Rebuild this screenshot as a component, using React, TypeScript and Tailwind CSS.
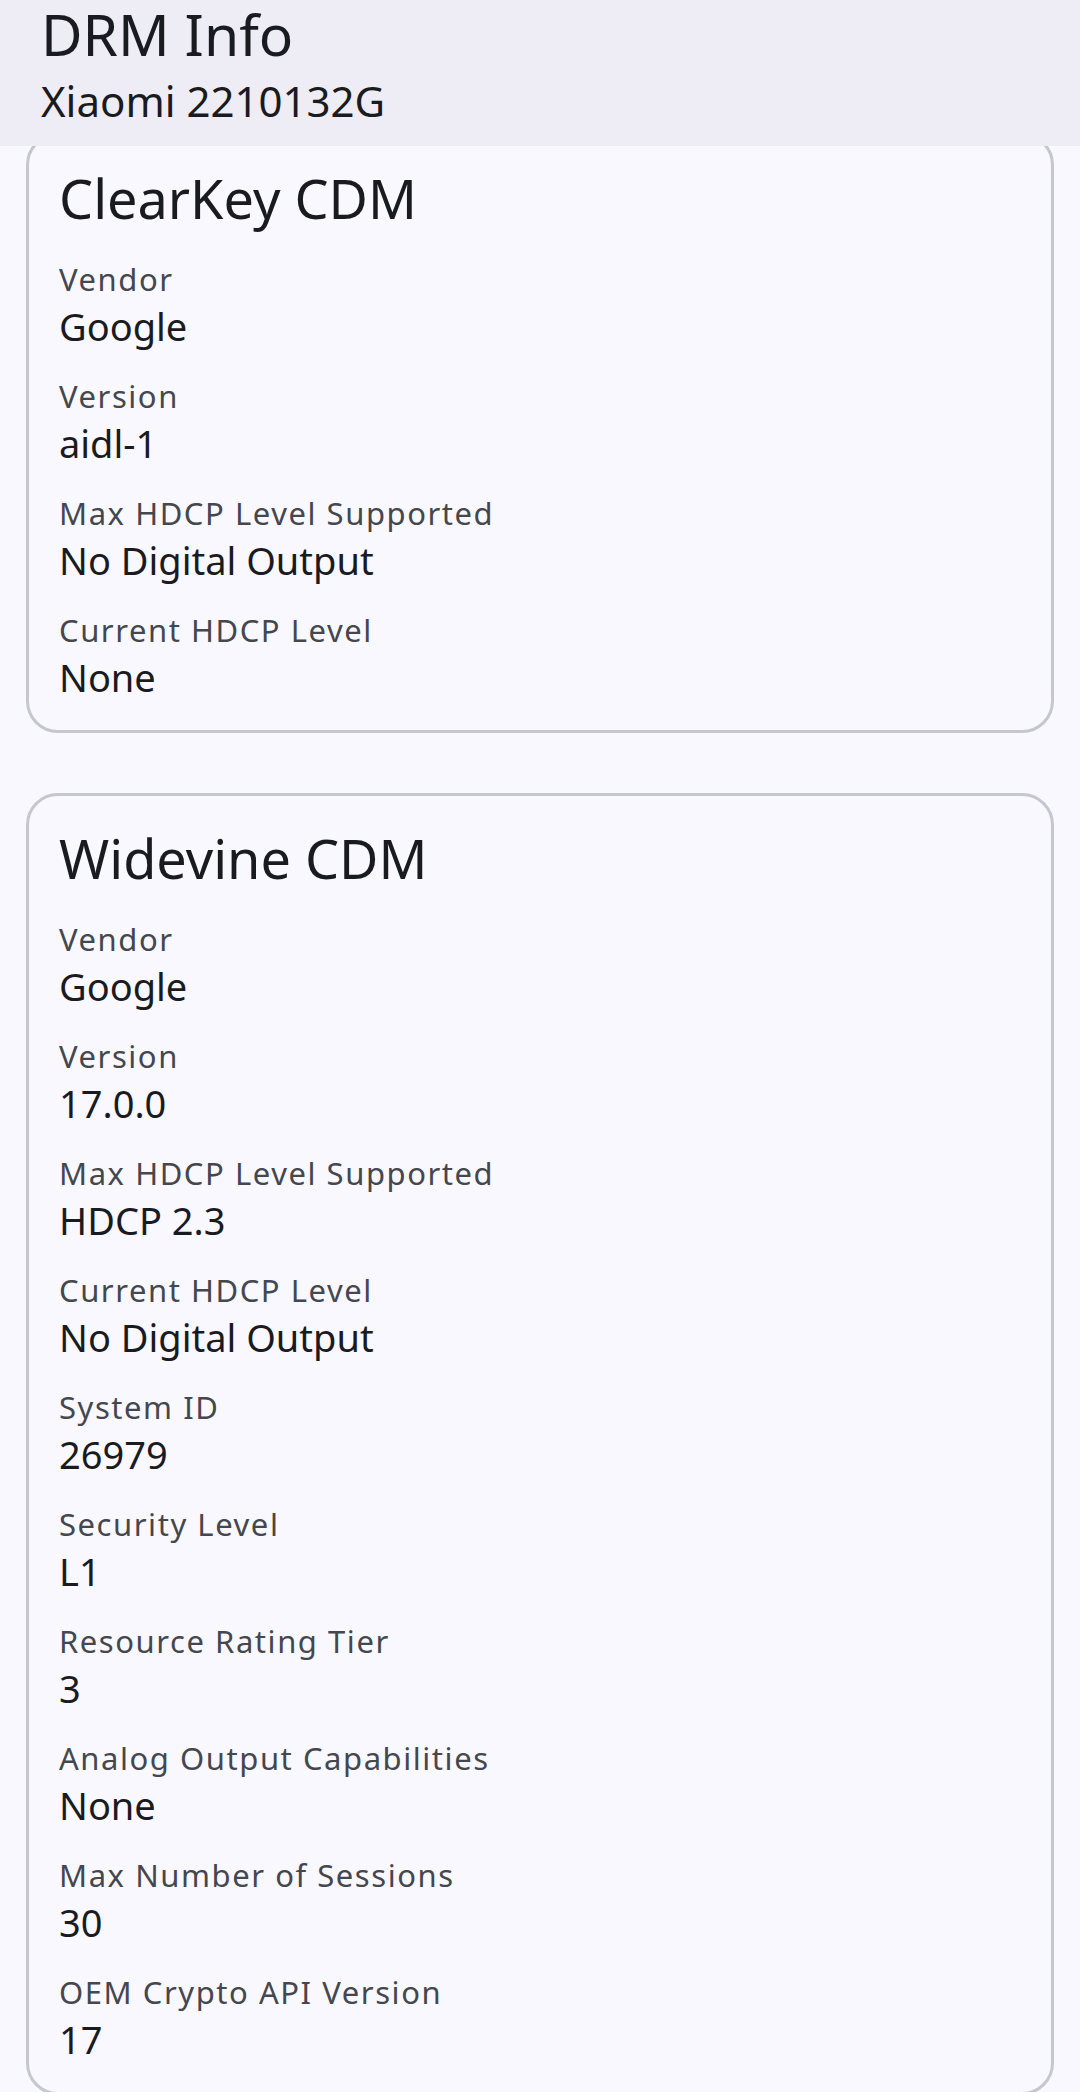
type Field = { label: string; value: string };

type Cdm = { name: string; fields: Field[] };

const cdms: Cdm[] = [
  {
    name: "ClearKey CDM",
    fields: [
      { label: "Vendor", value: "Google" },
      { label: "Version", value: "aidl-1" },
      { label: "Max HDCP Level Supported", value: "No Digital Output" },
      { label: "Current HDCP Level", value: "None" },
    ],
  },
  {
    name: "Widevine CDM",
    fields: [
      { label: "Vendor", value: "Google" },
      { label: "Version", value: "17.0.0" },
      { label: "Max HDCP Level Supported", value: "HDCP 2.3" },
      { label: "Current HDCP Level", value: "No Digital Output" },
      { label: "System ID", value: "26979" },
      { label: "Security Level", value: "L1" },
      { label: "Resource Rating Tier", value: "3" },
      { label: "Analog Output Capabilities", value: "None" },
      { label: "Max Number of Sessions", value: "30" },
      { label: "OEM Crypto API Version", value: "17" },
    ],
  },
];

function CdmCard({ cdm }: { cdm: Cdm }) {
  return (
    <section className="rounded-[32px] border-[3px] border-[#c4c6d0] bg-[#faf8ff] pb-[26px] pl-[30px] pr-[28px] pt-[28px]">
      <h2 className="text-[54px] font-normal leading-[68px] text-[#1a1b21]">{cdm.name}</h2>
      <div className="mt-[27px] flex flex-col gap-[23px]">
        {cdm.fields.map((field) => (
          <div key={field.label} className="flex flex-col">
            <span className="text-[31px] leading-[40px] tracking-[1.55px] text-[#44474e]">
              {field.label}
            </span>
            <span className="text-[38px] leading-[54px] text-[#1a1b21]">{field.value}</span>
          </div>
        ))}
      </div>
    </section>
  );
}

export default function App() {
  return (
    <div
      className="min-h-[2092px] w-[1080px] overflow-hidden bg-[#faf8ff]"
      style={{ fontFamily: '"Noto Sans", "Open Sans", sans-serif' }}
    >
      <header className="relative z-10 bg-[#eeedf5] px-[41px] pb-[17px] pt-[2px]">
        <h1 className="text-[57px] leading-[64px] text-[#1a1b21]">DRM Info</h1>
        <p className="mt-[7px] text-[42px] leading-[56px] text-[#1a1b21]">Xiaomi 2210132G</p>
      </header>
      <main className="-mt-[13px] flex flex-col gap-[60px] px-[26px]">
        {cdms.map((cdm) => (
          <CdmCard key={cdm.name} cdm={cdm} />
        ))}
      </main>
    </div>
  );
}
